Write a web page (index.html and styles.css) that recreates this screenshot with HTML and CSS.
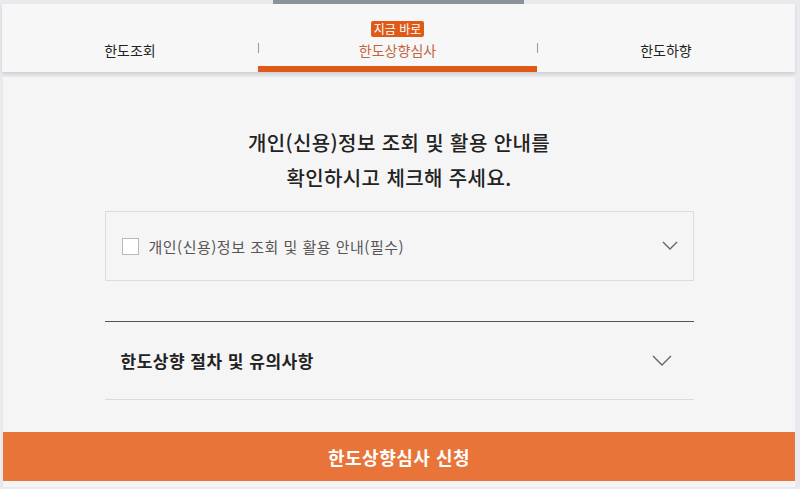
FILE: index.html
```html
<!DOCTYPE html>
<html lang="ko">
<head>
<meta charset="UTF-8">
<meta name="viewport" content="width=device-width, initial-scale=1.0">
<title>한도상향심사</title>
<link rel="stylesheet" href="styles.css">
</head>
<body>
    <div class="top-bar"><span class="top-bar-fill"></span></div>

    <nav class="tabs">
        <a class="tab">한도조회</a>
        <a class="tab active"><span class="badge">지금 바로</span>한도상향심사</a>
        <a class="tab">한도하향</a>
    </nav>

    <section class="content">
        <h2 class="title">개인(신용)정보 조회 및 활용 안내를<br>확인하시고 체크해 주세요.</h2>

        <div class="agree-box">
            <label class="agree-label"><span class="check"></span>개인(신용)정보 조회 및 활용 안내(필수)</label>
            <svg class="chev" width="16" height="10" viewBox="0 0 16 10"><path d="M1 1l7 7 7-7" fill="none" stroke="#666" stroke-width="1.4"/></svg>
        </div>

        <div class="notice">
            <h3>한도상향 절차 및 유의사항</h3>
            <svg class="chev big" width="20" height="12" viewBox="0 0 20 12"><path d="M1 1l9 9 9-9" fill="none" stroke="#666" stroke-width="1.4"/></svg>
        </div>

        <button class="apply-button">한도상향심사 신청</button>
    </section>
</body>
</html>
```

FILE: styles.css
```css
body {
    margin: 0;
    background-color: #e9eaed;
    font-family: "Noto Sans CJK KR", "Noto Sans", sans-serif;
    color: #222;
}
.top-bar {
    height: 4px;
    display: flex;
    justify-content: center;
}
.top-bar-fill {
    width: 251px;
    margin-left: -3px;
    background-color: #8c929a;
}
.tabs {
    margin: 0 5px 0 2px;
    height: 68px;
    background-color: #f7f7f7;
    display: grid;
    grid-template-columns: 256px 279px 1fr;
    box-shadow: 0 2px 3px rgba(0, 0, 0, 0.12);
}
.tab {
    display: flex;
    flex-direction: column;
    align-items: center;
    justify-content: flex-end;
    padding-bottom: 12px;
    font-size: 14px;
    color: #222;
    position: relative;
}
.tab + .tab::before {
    content: "";
    position: absolute;
    left: 0;
    top: 39px;
    height: 10px;
    width: 1px;
    background-color: #999;
}
.tab.active {
    color: #c2653f;
    border-bottom: 6px solid #e05a17;
    padding-bottom: 6px;
}
.badge {
    background-color: #e05a17;
    color: #fff;
    font-size: 12px;
    line-height: 16px;
    padding: 0 3px;
    border-radius: 2px;
    margin-bottom: 3px;
}
.content {
    margin: 5px 5px 0 3px;
    background-color: #f5f5f5;
    padding: 48px 0 6px;
    display: flex;
    flex-direction: column;
    align-items: center;
}
.title {
    margin: 0;
    font-size: 20px;
    font-weight: 500;
    letter-spacing: 0.4px;
    line-height: 35px;
    text-align: center;
    color: #222;
}
.agree-box {
    width: 589px;
    height: 70px;
    margin-top: 16px;
    border: 1px solid #dcdcdc;
    box-sizing: border-box;
    display: flex;
    align-items: center;
    justify-content: space-between;
    padding: 0 15px 0 16px;
}
.agree-label {
    display: flex;
    align-items: center;
    font-size: 15px;
    letter-spacing: 0.5px;
    color: #555;
}
.check {
    width: 15px;
    height: 15px;
    border: 1px solid #b9b9b9;
    background-color: #fff;
    margin-right: 10px;
}
.notice {
    width: 589px;
    height: 79px;
    margin-top: 40px;
    border-top: 1px solid #555;
    border-bottom: 1px solid #dadada;
    display: flex;
    align-items: center;
    justify-content: space-between;
    padding: 0 22px 0 16px;
    box-sizing: border-box;
}
.notice h3 {
    margin: 0;
    font-size: 17px;
    font-weight: 700;
    letter-spacing: 0.5px;
}
.apply-button {
    width: 100%;
    margin-top: 32px;
    height: 49px;
    border: none;
    background-color: #e8743a;
    color: #fff;
    font-family: inherit;
    font-size: 18px;
    font-weight: 700;
    letter-spacing: 0.5px;
}
```
